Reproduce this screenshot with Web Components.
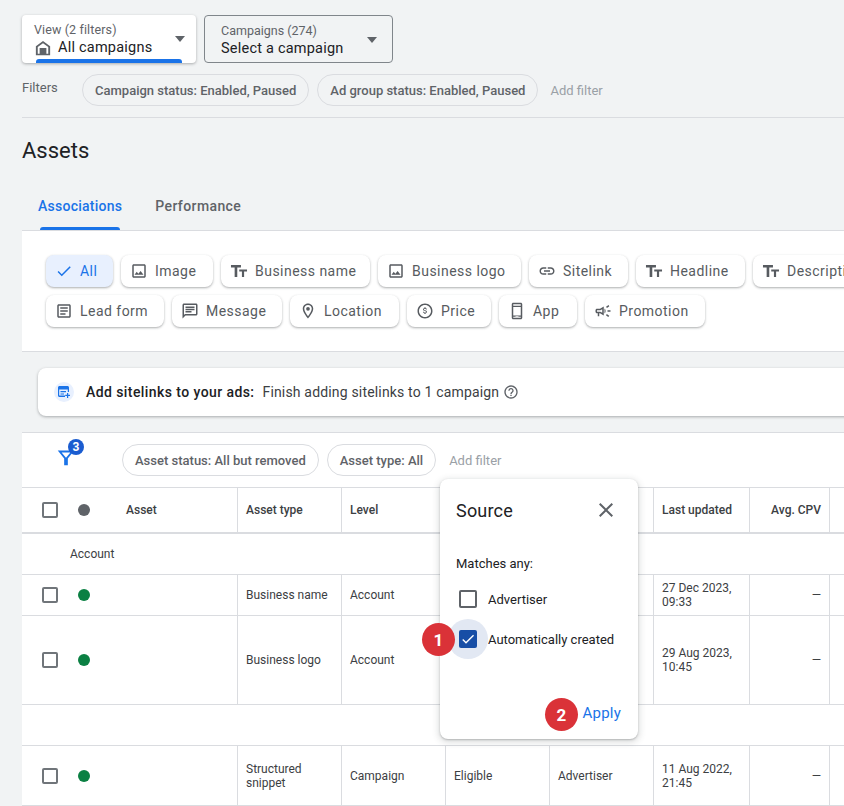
<!DOCTYPE html>
<html lang="en">
<head>
<meta charset="utf-8">
<title>Assets</title>
<style>
  html, body { margin: 0; height: 806px; overflow: hidden; background: #f1f3f4; }
  body { font-family: Roboto, sans-serif; color: #3c4043; }
  .page { width: 844px; height: 806px; position: relative; overflow: hidden; padding-left: 22px; box-sizing: border-box; }
  .pickers { display: flex; gap: 8px; padding-top: 15px; }
</style>
</head>
<body>
<div class="page">
  <div class="pickers">
    <ad-picker active label="View (2 filters)" home>All campaigns</ad-picker>
    <ad-picker label="Campaigns (274)">Select a campaign</ad-picker>
  </div>
  <ad-filter-bar></ad-filter-bar>
  <ad-page-head></ad-page-head>
  <ad-type-panel></ad-type-panel>
  <ad-banner></ad-banner>
  <ad-asset-table></ad-asset-table>
  <ad-source-popover></ad-source-popover>
</div>

<script>
// Material icon paths, all on a 24 box
const ICONS = {
  image: 'M19 5v14H5V5h14m0-2H5c-1.1 0-2 .9-2 2v14c0 1.1.9 2 2 2h14c1.1 0 2-.9 2-2V5c0-1.1-.9-2-2-2zm-4.86 8.86l-3 3.87L9 13.14 6 17h12l-3.86-5.14z',
  title: 'M1.3 4h13.3v3.3H9.7V20H6.2V7.300H1.300zM12.300 10h10.400v2.700h-3.900V20h-2.900v-7.300h-3.600z',
  link: 'M3.9 12c0-1.71 1.39-3.1 3.1-3.1h4V7H7c-2.76 0-5 2.24-5 5s2.24 5 5 5h4v-1.9H7c-1.71 0-3.1-1.39-3.1-3.1zM8 13h8v-2H8v2zm9-6h-4v1.9h4c1.71 0 3.1 1.39 3.1 3.1s-1.39 3.1-3.1 3.1h-4V17h4c2.76 0 5-2.24 5-5s-2.24-5-5-5z',
  form: 'M19 5v14H5V5h14m0-2H5c-1.1 0-2 .9-2 2v14c0 1.1.9 2 2 2h14c1.1 0 2-.9 2-2V5c0-1.1-.9-2-2-2zM14 17H7v-2h7v2zm3-4H7v-2h10v2zm0-4H7V7h10v2z',
  message: 'M20 2H4c-1.1 0-2 .9-2 2v18l4-4h14c1.1 0 2-.9 2-2V4c0-1.1-.9-2-2-2zm0 14H5.17L4 17.17V4h16v12zM6 12h8v2H6zm0-3h12v2H6zm0-3h12v2H6z',
  pin: 'M12 2C8.13 2 5 5.13 5 9c0 5.25 7 13 7 13s7-7.75 7-13c0-3.87-3.13-7-7-7zM7 9c0-2.76 2.24-5 5-5s5 2.24 5 5c0 2.88-2.88 7.19-5 9.88C9.92 16.21 7 11.85 7 9zm5-2.5a2.5 2.5 0 1 0 0 5 2.5 2.5 0 0 0 0-5z',
  price: 'M12 2C6.48 2 2 6.48 2 12s4.48 10 10 10 10-4.48 10-10S17.52 2 12 2zm0 18c-4.41 0-8-3.59-8-8s3.59-8 8-8 8 3.59 8 8-3.59 8-8 8zm.2-9c-1.2-.3-1.6-.6-1.6-1.1 0-.6.5-.95 1.4-.95s1.3.45 1.3 1.1h1.2c-.03-.9-.6-1.7-1.7-2V6.9h-1.6V8c-1 .2-1.8.9-1.8 1.9 0 1.2 1 1.8 2.4 2.1 1.3.3 1.6.8 1.6 1.25 0 .35-.25.9-1.4.9-1.05 0-1.5-.5-1.55-1.1H9.3c.07 1.15.9 1.8 1.9 2v1.1h1.6V15c1-.2 1.8-.8 1.8-1.85 0-1.45-1.2-1.9-2.4-2.15z',
  app: 'M17 1H7c-1.1 0-2 .9-2 2v18c0 1.1.9 2 2 2h10c1.1 0 2-.9 2-2V3c0-1.1-.9-2-2-2zM7 3h10v2H7V3zm0 18v-1.5h10V21H7zm0-3V6.5h10V18H7zm3 1h4v.5h-4z',
  promo: 'M18 11v2h4v-2h-4zm-2 6.61c.96.71 2.21 1.65 3.2 2.39.4-.53.8-1.07 1.2-1.6-.99-.74-2.24-1.68-3.2-2.4-.4.54-.8 1.08-1.2 1.61zM20.4 5.6c-.4-.53-.8-1.07-1.2-1.6-.99.74-2.24 1.68-3.2 2.4.4.53.8 1.07 1.2 1.6.96-.72 2.21-1.65 3.2-2.4zM4 9c-1.1 0-2 .9-2 2v2c0 1.1.9 2 2 2h1v4h2v-4h1l5 3V6L8 9H4zm5.03 1.71L11 9.53v4.94l-1.97-1.18-.48-.29H4v-2h4.55l.48-.29zM15.5 12c0-1.33-.58-2.53-1.5-3.35v6.69c.92-.81 1.5-2.01 1.5-3.34z',
  check: 'M9 16.17L4.83 12l-1.42 1.41L9 19 21 7l-1.41-1.41z',
  help: 'M11 18h2v-2h-2v2zm1-16C6.48 2 2 6.48 2 12s4.48 10 10 10 10-4.48 10-10S17.52 2 12 2zm0 18c-4.41 0-8-3.59-8-8s3.59-8 8-8 8 3.59 8 8-3.59 8-8 8zm0-14c-2.21 0-4 1.79-4 4h2c0-1.1.9-2 2-2s2 .9 2 2c0 2-3 1.75-3 5h2c0-2.25 3-2.5 3-5 0-2.21-1.79-4-4-4z',
  close: 'M19 6.41L17.59 5 12 10.59 6.41 5 5 6.41 10.59 12 5 17.59 6.41 19 12 13.41 17.59 19 19 17.59 13.41 12z',
  home: 'M12 2.500L2.500 9.800V21.500h19V9.800L12 2.500zm7 17h-2.500v-7.500h-9v7.500H5v-8.700l7-5.300 7 5.300v8.700z',
  funnel: 'M3 5h18l-7 8.5V21h-4v-7.5L3 5zm4.2 2l4.8 5.8L16.800 7H7.200z',
};
const icon = (name, size, color = 'currentColor') =>
  `<svg width="${size}" height="${size}" viewBox="0 0 24 24" fill="${color}" fill-rule="evenodd" aria-hidden="true"><path d="${ICONS[name]}"/></svg>`;

class AdPicker extends HTMLElement {
  connectedCallback() {
    const active = this.hasAttribute('active');
    this.attachShadow({ mode: 'open' }).innerHTML = `
      <style>
        :host { display: block; box-sizing: border-box; height: 48px; position: relative; border-radius: 4px;
                ${active ? 'width: 174px; background: #fff; box-shadow: 0 1px 3px rgba(60,64,67,.4);'
                         : 'width: 189px; border: 1px solid #80868b;'} }
        .wrap { padding: ${active ? '7px 0 0 12px' : '7px 0 0 16px'}; }
        .label { font-size: 12.5px; line-height: 15px; color: #5f6368; letter-spacing: ${active ? '.12px' : '0'}; }
        .value { font-size: 14.5px; line-height: 20px; letter-spacing: .22px; color: #202124; display: flex; align-items: center; gap: 6px; margin-top: 1px; }
        .caret { position: absolute; top: 21px; right: ${active ? '11px' : '15px'}; border: 5px solid transparent; border-top: 6px solid #5f6368; border-bottom: 0; }
        .bar { position: absolute; left: 14px; right: 14px; bottom: 0; height: 4px; background: #1a73e8; border-radius: 3px 3px 0 0; }
      </style>
      <div class="wrap">
        <div class="label">${this.getAttribute('label')}</div>
        <div class="value">${this.hasAttribute('home') ? icon('home', 18, '#5f6368') : ''}<slot></slot></div>
      </div>
      <span class="caret"></span>
      ${active ? '<span class="bar"></span>' : ''}`;
  }
}
customElements.define('ad-picker', AdPicker);

class AdPill extends HTMLElement {
  connectedCallback() {
    this.attachShadow({ mode: 'open' }).innerHTML = `
      <style>
        :host { display: inline-flex; align-items: center; box-sizing: border-box; height: 32px; padding: 0 12px;
                border: 1px solid #dadce0; border-radius: 16px; font-size: 13px; font-weight: 500; color: #5f6368; white-space: nowrap; }
      </style><slot></slot>`;
  }
}
customElements.define('ad-pill', AdPill);

class AdFilterBar extends HTMLElement {
  connectedCallback() {
    this.attachShadow({ mode: 'open' }).innerHTML = `
      <style>
        :host { display: flex; align-items: center; height: 32px; margin-top: 11px; padding-bottom: 11px; border-bottom: 1px solid #dadce0; }
        .name { font-size: 13px; color: #5f6368; width: 60px; margin-top: -5px; }
        ad-pill + ad-pill { margin-left: 8px; }
        .add { font-size: 13px; color: #9aa0a6; margin-left: 12px; }
      </style>
      <span class="name">Filters</span>
      <ad-pill>Campaign status: Enabled, Paused</ad-pill>
      <ad-pill>Ad group status: Enabled, Paused</ad-pill>
      <span class="add">Add filter</span>`;
  }
}
customElements.define('ad-filter-bar', AdFilterBar);

class AdPageHead extends HTMLElement {
  connectedCallback() {
    this.attachShadow({ mode: 'open' }).innerHTML = `
      <style>
        :host { display: block; }
        h1 { margin: 0; padding-top: 19px; font-size: 22px; line-height: 28px; font-weight: 400; color: #202124; }
        .tabs { display: flex; gap: 33px; padding: 31px 0 0 16px; height: 34px; }
        .tab { font-size: 14px; font-weight: 500; letter-spacing: .25px; line-height: 20px; color: #5f6368; position: relative; height: 34px; }
        .tab + .tab { letter-spacing: .4px; }
        .tab.on { color: #1a73e8; }
        .tab.on::after { content: ''; position: absolute; left: 2px; right: 2px; bottom: 0; height: 3px; background: #1a73e8; border-radius: 3px 3px 0 0; }
      </style>
      <h1>Assets</h1>
      <div class="tabs"><span class="tab on">Associations</span><span class="tab">Performance</span></div>`;
  }
}
customElements.define('ad-page-head', AdPageHead);

// w is the chip's width; the row's gaps do the rest
class AdTypeChip extends HTMLElement {
  connectedCallback() {
    const on = this.hasAttribute('on');
    this.attachShadow({ mode: 'open' }).innerHTML = `
      <style>
        :host { display: inline-flex; align-items: center; gap: 7px; box-sizing: border-box; height: 32px; width: ${this.getAttribute('w')}px; padding-left: 9px; flex: none;
                border-radius: 8px; font-size: 14px; font-weight: 400; letter-spacing: .47px; white-space: nowrap;
                background: ${on ? '#e8f0fe' : '#fff'}; color: ${on ? '#1a73e8' : '#575b60'};
                box-shadow: 0 1px 2px rgba(60,64,67,.3), 0 1px 3px rgba(60,64,67,.15); }
      </style>${icon(this.getAttribute('icon'), 18)}<slot></slot>`;
  }
}
customElements.define('ad-type-chip', AdTypeChip);

class AdTypePanel extends HTMLElement {
  connectedCallback() {
    this.attachShadow({ mode: 'open' }).innerHTML = `
      <style>
        :host { display: block; background: #fff; border-top: 1px solid #dadce0; border-bottom: 1px solid #dadce0; padding: 24px 0 24px 24px; height: 72px; }
        .row { display: flex; gap: 8px; }
        .row + .row { margin-top: 8px; }
      </style>
      <div class="row">
        <ad-type-chip on icon="check" w="67">All</ad-type-chip>
        <ad-type-chip icon="image" w="92">Image</ad-type-chip>
        <ad-type-chip icon="title" w="149">Business name</ad-type-chip>
        <ad-type-chip icon="image" w="143">Business logo</ad-type-chip>
        <ad-type-chip icon="link" w="99">Sitelink</ad-type-chip>
        <ad-type-chip icon="title" w="109">Headline</ad-type-chip>
        <ad-type-chip icon="title" w="130">Description</ad-type-chip>
      </div>
      <div class="row">
        <ad-type-chip icon="form" w="118">Lead form</ad-type-chip>
        <ad-type-chip icon="message" w="110">Message</ad-type-chip>
        <ad-type-chip icon="pin" w="109">Location</ad-type-chip>
        <ad-type-chip icon="price" w="84">Price</ad-type-chip>
        <ad-type-chip icon="app" w="78">App</ad-type-chip>
        <ad-type-chip icon="promo" w="120">Promotion</ad-type-chip>
      </div>`;
  }
}
customElements.define('ad-type-panel', AdTypePanel);

class AdBanner extends HTMLElement {
  connectedCallback() {
    this.attachShadow({ mode: 'open' }).innerHTML = `
      <style>
        :host { display: flex; align-items: center; box-sizing: border-box; height: 48px; margin: 16px 0 16px 16px; width: 830px; padding-left: 16px;
                background: #fff; border-radius: 8px; box-shadow: 0 1px 3px rgba(60,64,67,.4); font-size: 14px; letter-spacing: .17px; color: #3c4043; white-space: nowrap; }
        .badge { width: 20px; height: 20px; border-radius: 50%; background: #e8f0fe; display: grid; place-items: center; margin-right: 12px; }
        b { font-weight: 500; color: #202124; margin-right: 8px; letter-spacing: .42px; }
        .help { margin-left: 4px; display: flex; color: #5f6368; }
      </style>
      <span class="badge"><svg width="14" height="14" viewBox="0 0 14 14"><path fill="#1a73e8" fill-rule="evenodd" d="M1 2.500C1 1.700 1.700 1 2.500 1h8c.8 0 1.500.7 1.500 1.500V7h-1.200V4.500H2.200v6H8V12H2.500C1.700 12 1 11.300 1 10.500zM3.500 6H9v1.200H3.500zm0 2.400H7v1.200H3.500zM10 8h1.200v1.800H13V11h-1.800v2H10v-2H8.200V9.800H10z"/></svg></span>
      <b>Add sitelinks to your ads:</b>
      <span>Finish adding sitelinks to 1 campaign</span>
      <span class="help">${icon('help', 16)}</span>`;
  }
}
customElements.define('ad-banner', AdBanner);

class AdCheck extends HTMLElement {
  connectedCallback() {
    const on = this.hasAttribute('on');
    this.attachShadow({ mode: 'open' }).innerHTML = `
      <style>
        :host { display: grid; place-items: center; box-sizing: border-box; width: 16px; height: 16px; flex: none; border-radius: 2px;
                ${on ? 'background: #174ea6;' : 'border: 2px solid var(--box, #70757a);'} }
      </style>${on ? icon('check', 16, '#fff') : ''}`;
  }
}
customElements.define('ad-check', AdCheck);

// One line of the table; the cells are given as attributes, the row height as h
class AdRow extends HTMLElement {
  connectedCallback() {
    const a = n => this.getAttribute(n) || '';
    const cells = [a('type'), a('level'), a('status'), a('source'), a('updated')];
    this.attachShadow({ mode: 'open' }).innerHTML = `
      <style>
        :host { display: grid; grid-template-columns: var(--cols); height: ${a('h')}px; box-sizing: border-box;
                border-bottom: 1px solid #dadce0; font-size: 12px; line-height: 14px; color: #3c4043; }
        .lead { display: flex; align-items: center; padding-left: 20px; gap: 20px; }
        .dot { width: 12px; height: 12px; border-radius: 50%; background: #0b8043; }
        .cell { display: flex; align-items: center; padding: 0 8px; border-left: 1px solid #dadce0; }
        .num { justify-content: flex-end; }
      </style>
      <div class="lead"><ad-check></ad-check><span class="dot"></span></div>
      ${cells.map(c => `<div class="cell">${c}</div>`).join('')}
      <div class="cell num">—</div>
      <div class="cell"></div>`;
  }
}
customElements.define('ad-row', AdRow);

class AdAssetTable extends HTMLElement {
  connectedCallback() {
    this.attachShadow({ mode: 'open' }).innerHTML = `
      <style>
        :host { display: block; background: #fff; border-top: 1px solid #dadce0; height: 373px; overflow: hidden;
                --cols: 215px 104px 104px 104px 104px 96px 80px 36px; }
        .tools { display: flex; align-items: center; height: 54px; border-bottom: 1px solid #dadce0; position: relative; padding-left: 100px; }
        .tools ad-pill + ad-pill { margin-left: 8px; }
        .add { font-size: 13px; color: #9aa0a6; margin-left: 13px; }
        .funnel { position: absolute; left: 33px; top: 13px; color: #1a73e8; display: flex; }
        .count { position: absolute; left: 46px; top: 6px; width: 16px; height: 16px; border-radius: 50%; background: #1a5cd0; color: #fff; font-size: 12px; font-weight: 700; text-align: center; line-height: 16px; }
        .head { display: grid; grid-template-columns: var(--cols); height: 44px; border-bottom: 2px solid #dadce0; font-size: 12px; font-weight: 500; color: #3c4043; }
        .head .lead { display: flex; align-items: center; padding-left: 20px; }
        .head .dot { width: 12px; height: 12px; border-radius: 50%; background: #5f6368; margin: 0 36px 0 20px; }
        .head .cell { display: flex; align-items: center; padding: 0 8px; border-left: 1px solid #dadce0; }
        .head .num { justify-content: flex-end; }
        .group { height: 41px; box-sizing: border-box; border-bottom: 1px solid #dadce0; font-size: 12px; color: #3c4043; display: flex; align-items: center; padding-left: 48px; }
        .blank { height: 41px; box-sizing: border-box; border-bottom: 1px solid #dadce0; }
      </style>
      <div class="tools">
        <span class="funnel">${icon('funnel', 22)}</span><span class="count">3</span>
        <ad-pill>Asset status: All but removed</ad-pill>
        <ad-pill>Asset type: All</ad-pill>
        <span class="add">Add filter</span>
      </div>
      <div class="head">
        <div class="lead"><ad-check></ad-check><span class="dot"></span><span>Asset</span></div>
        <div class="cell">Asset type</div><div class="cell">Level</div><div class="cell"></div><div class="cell"></div>
        <div class="cell">Last updated</div><div class="cell num">Avg. CPV</div><div class="cell"></div>
      </div>
      <div class="group">Account</div>
      <ad-row h="41" type="Business name" level="Account" updated="27 Dec 2023, 09:33"></ad-row>
      <ad-row h="89" type="Business logo" level="Account" updated="29 Aug 2023, 10:45"></ad-row>
      <div class="blank"></div>
      <ad-row h="60" type="Structured snippet" level="Campaign" status="Eligible" source="Advertiser" updated="11 Aug 2022, 21:45"></ad-row>`;
  }
}
customElements.define('ad-asset-table', AdAssetTable);

class AdStep extends HTMLElement {
  connectedCallback() {
    this.attachShadow({ mode: 'open' }).innerHTML = `
      <style>
        :host { position: absolute; width: 33px; height: 33px; border-radius: 50%; background: #da3238; color: #fff;
                display: grid; place-items: center; font-size: 17px; font-weight: 700; }
      </style><slot></slot>`;
  }
}
customElements.define('ad-step', AdStep);

class AdSourcePopover extends HTMLElement {
  connectedCallback() {
    this.attachShadow({ mode: 'open' }).innerHTML = `
      <style>
        :host { position: absolute; left: 440px; top: 479px; width: 198px; height: 260px; box-sizing: border-box; padding: 0 16px;
                background: #fff; border-radius: 8px; box-shadow: 0 2px 6px 2px rgba(60,64,67,.15), 0 1px 2px rgba(60,64,67,.3); color: #202124; --box: #5f6368; }
        .top { display: flex; align-items: center; justify-content: space-between; height: 62px; font-size: 18px; letter-spacing: .2px; }
        .close { display: flex; color: #5f6368; margin-right: 4px; }
        .any { font-size: 13px; line-height: 16px; margin-top: 15px; }
        .opt { display: flex; align-items: center; gap: 11px; height: 40px; font-size: 13px; padding-left: 3px; position: relative; }
        .opts { margin-top: 7px; }
        .ring { position: absolute; left: -8px; top: 0; width: 40px; height: 40px; border-radius: 50%; background: #e2e8f3; }
        ad-check { position: relative; width: 18px; height: 18px; }
        .apply { position: absolute; right: 17px; bottom: 17px; font-size: 15px; letter-spacing: .2px; color: #1a73e8; }
      </style>
      <div class="top"><span>Source</span><span class="close">${icon('close', 24)}</span></div>
      <div class="any">Matches any:</div>
      <div class="opts">
        <div class="opt"><ad-check></ad-check>Advertiser</div>
        <div class="opt"><span class="ring"></span><ad-check on></ad-check>Automatically created</div>
      </div>
      <span class="apply">Apply</span>
      <ad-step style="left:-18px;top:144px">1</ad-step>
      <ad-step style="left:105px;top:219px">2</ad-step>`;
  }
}
customElements.define('ad-source-popover', AdSourcePopover);
</script>
</body>
</html>
